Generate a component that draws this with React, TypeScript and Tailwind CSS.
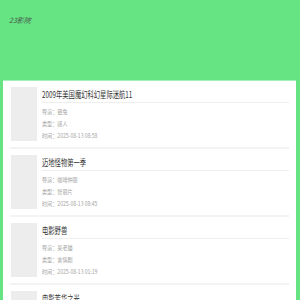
import React from "react";

const items = [
  {
    title: "2009年美国魔幻科幻星际迷航11",
    director: "锟兔",
    genre: "感人",
    time: "2025-08-13 08:58",
  },
  {
    title: "迈地怪物第一季",
    director: "咖啡仲丽",
    genre: "智丽片",
    time: "2025-08-13 08:45",
  },
  {
    title: "电影野兽",
    director: "某老猫",
    genre: "言情剧",
    time: "2025-08-13 01:19",
  },
  {
    title: "电影芳华之光",
    director: "小白",
    genre: "剧情",
    time: "2025-08-13 00:52",
  },
];

export default function App() {
  return (
    <div
      className="w-[300px] h-[300px] overflow-hidden bg-[#66e383]"
      style={{ fontFamily: '"Noto Sans CJK SC", "Noto Sans", sans-serif' }}
    >
      <div className="h-[80px] pl-[9px] pt-[15px]">
        <div className="text-[7px] italic text-[#4a5a4e] leading-[10px]">23影院</div>
      </div>

      <div className="ml-[3px] mr-[4px] bg-white border-t border-[#a3efb6] px-[7px]">
        {items.map((item) => (
          <div key={item.title} className="flex gap-[5px] pt-[6px] pb-[5px] border-b-2 border-[#f3f3f3]">
            <div className="ml-[1px] w-[26px] h-[54px] bg-[#ededed] shrink-0" />
            <div className="flex-1 min-w-0">
              <div className="h-[16px] border-b border-[#eeeeee]">
                <div className="text-[9px] leading-[15px] text-[#333] whitespace-nowrap origin-left scale-x-[0.7]">
                  {item.title}
                </div>
              </div>
              <div className="mt-[3px] text-[6px] text-[#a5a5a5] whitespace-nowrap">
                <div className="h-[12px] leading-[12px] origin-left scale-x-[0.85]">导演：{item.director}</div>
                <div className="h-[12px] leading-[12px] origin-left scale-x-[0.85]">类型：{item.genre}</div>
                <div className="h-[12px] leading-[12px] origin-left scale-x-[0.85]">时间：{item.time}</div>
              </div>
            </div>
          </div>
        ))}
      </div>
    </div>
  );
}
